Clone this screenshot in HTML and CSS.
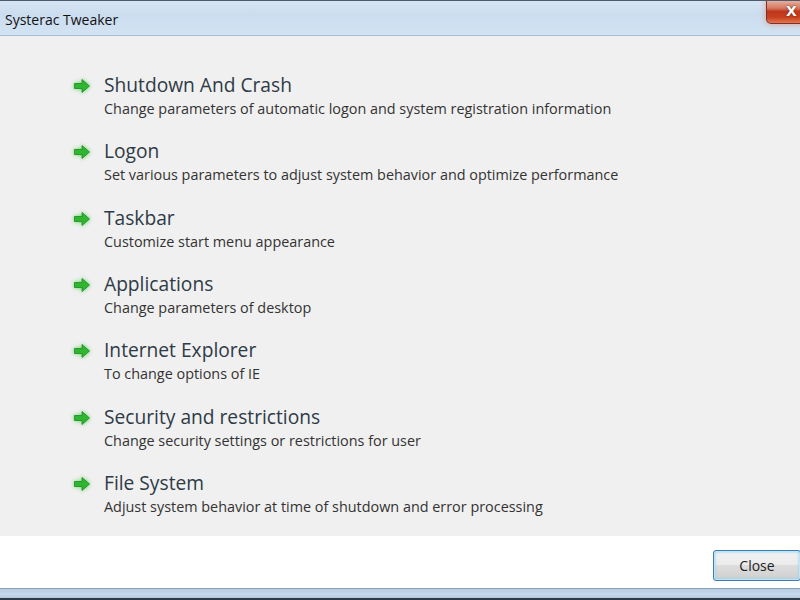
FILE: index.html
```html
<!DOCTYPE html>
<html lang="en">
<head>
    <meta charset="UTF-8">
    <title>Systerac Tweaker</title>
    <link rel="stylesheet" href="styles.css">
</head>
<body>
    <div class="window">
        <div class="titlebar">
            <span class="title">Systerac Tweaker</span>
            <div class="close-x">X</div>
        </div>

        <div class="content">
            <div class="item">
                <svg class="arrow" viewBox="0 0 18 16"><path d="M9 1.5 L16.5 8 L9 14.5 L9 10.5 L1.5 10.5 L1.5 5.5 L9 5.5 Z"/></svg>
                <div class="item-text">
                    <div class="item-title">Shutdown And Crash</div>
                    <div class="item-desc">Change parameters of automatic logon and system registration information</div>
                </div>
            </div>
            <div class="item">
                <svg class="arrow" viewBox="0 0 18 16"><path d="M9 1.5 L16.5 8 L9 14.5 L9 10.5 L1.5 10.5 L1.5 5.5 L9 5.5 Z"/></svg>
                <div class="item-text">
                    <div class="item-title">Logon</div>
                    <div class="item-desc">Set various parameters to adjust system behavior and optimize performance</div>
                </div>
            </div>
            <div class="item">
                <svg class="arrow" viewBox="0 0 18 16"><path d="M9 1.5 L16.5 8 L9 14.5 L9 10.5 L1.5 10.5 L1.5 5.5 L9 5.5 Z"/></svg>
                <div class="item-text">
                    <div class="item-title">Taskbar</div>
                    <div class="item-desc">Customize start menu appearance</div>
                </div>
            </div>
            <div class="item">
                <svg class="arrow" viewBox="0 0 18 16"><path d="M9 1.5 L16.5 8 L9 14.5 L9 10.5 L1.5 10.5 L1.5 5.5 L9 5.5 Z"/></svg>
                <div class="item-text">
                    <div class="item-title">Applications</div>
                    <div class="item-desc">Change parameters of desktop</div>
                </div>
            </div>
            <div class="item">
                <svg class="arrow" viewBox="0 0 18 16"><path d="M9 1.5 L16.5 8 L9 14.5 L9 10.5 L1.5 10.5 L1.5 5.5 L9 5.5 Z"/></svg>
                <div class="item-text">
                    <div class="item-title">Internet Explorer</div>
                    <div class="item-desc">To change options of IE</div>
                </div>
            </div>
            <div class="item">
                <svg class="arrow" viewBox="0 0 18 16"><path d="M9 1.5 L16.5 8 L9 14.5 L9 10.5 L1.5 10.5 L1.5 5.5 L9 5.5 Z"/></svg>
                <div class="item-text">
                    <div class="item-title">Security and restrictions</div>
                    <div class="item-desc">Change security settings or restrictions for user</div>
                </div>
            </div>
            <div class="item">
                <svg class="arrow" viewBox="0 0 18 16"><path d="M9 1.5 L16.5 8 L9 14.5 L9 10.5 L1.5 10.5 L1.5 5.5 L9 5.5 Z"/></svg>
                <div class="item-text">
                    <div class="item-title">File System</div>
                    <div class="item-desc">Adjust system behavior at time of shutdown and error processing</div>
                </div>
            </div>
        </div>

        <div class="footer">
            <button class="button">Close</button>
        </div>

        <div class="frame-bottom"></div>
    </div>
</body>
</html>
```

FILE: styles.css
```css
body {
    margin: 0;
    width: 800px;
    height: 600px;
    overflow: hidden;
    font-family: 'Open Sans', 'Noto Sans', sans-serif;
    color: #333;
}
.window {
    display: flex;
    flex-direction: column;
    height: 600px;
}
.titlebar {
    height: 36px;
    flex-shrink: 0;
    box-sizing: border-box;
    border-top: 1px solid #4b5b6b;
    border-bottom: 1px solid #a9bed3;
    background: linear-gradient(to bottom, #d6e4f2 0%, #cbddef 40%, #d2e3f3 100%);
    display: flex;
    justify-content: space-between;
    align-items: flex-start;
    overflow: hidden;
}
.title {
    font-size: 14px;
    color: #111;
    margin: 9px 0 0 5px;
}
.close-x {
    width: 46px;
    height: 24px;
    margin: -1px -12px 0 0;
    box-sizing: border-box;
    border: 1px solid #7a3324;
    border-top: none;
    border-radius: 0 0 0 5px;
    background: linear-gradient(to bottom, #eab3a4 0%, #d47a63 35%, #c0361c 50%, #c8401f 75%, #e27752 100%);
    box-shadow: 0 0 6px rgba(230, 110, 70, 0.6);
    color: #fff;
    font-family: 'DejaVu Sans', sans-serif;
    font-weight: bold;
    font-size: 14px;
    padding: 3px 0 0 19px;
    text-shadow: 0 0 2px #5a1a10;
}
.content {
    height: 500px;
    flex-shrink: 0;
    box-sizing: border-box;
    background-color: #f0f0f0;
    padding: 37px 0 0 73px;
    display: flex;
    flex-direction: column;
    gap: 19.33px;
}
.item {
    display: flex;
    align-items: flex-start;
}
.arrow {
    width: 18px;
    height: 16px;
    margin: 5px 13px 0 0;
    flex-shrink: 0;
    fill: #2fb52f;
    stroke: #1f8a22;
    stroke-width: 0.8;
    filter: drop-shadow(0 0 2px rgba(60, 200, 60, 0.8));
}
.item-title {
    font-size: 19.2px;
    line-height: 24px;
    color: #2e3a46;
}
.item-desc {
    font-size: 14.4px;
    line-height: 23px;
    color: #333;
}
.footer {
    height: 52px;
    flex-shrink: 0;
    background-color: #fff;
    display: flex;
    justify-content: flex-end;
    align-items: flex-start;
}
.button {
    width: 88px;
    height: 31px;
    margin: 14px -1px 0 0;
    border: 1px solid #3d7bad;
    border-radius: 3px;
    background: linear-gradient(to bottom, #f2f2f2 0%, #ebebeb 49%, #dddddd 50%, #cfcfcf 100%);
    box-shadow: inset 0 0 0 1px #bfe6f7, inset 0 0 3px 1px #8fd0ee;
    font-family: 'Open Sans', 'Noto Sans', sans-serif;
    font-size: 14px;
    color: #222;
    padding: 0;
}
.frame-bottom {
    flex-grow: 1;
    border-top: 1px solid #8d9fb2;
    background: linear-gradient(to bottom, #b8cde2 0%, #c6d9ec 50%, #b4cade 80%, #2f3b46 82%, #2f3b46 100%);
}
```
